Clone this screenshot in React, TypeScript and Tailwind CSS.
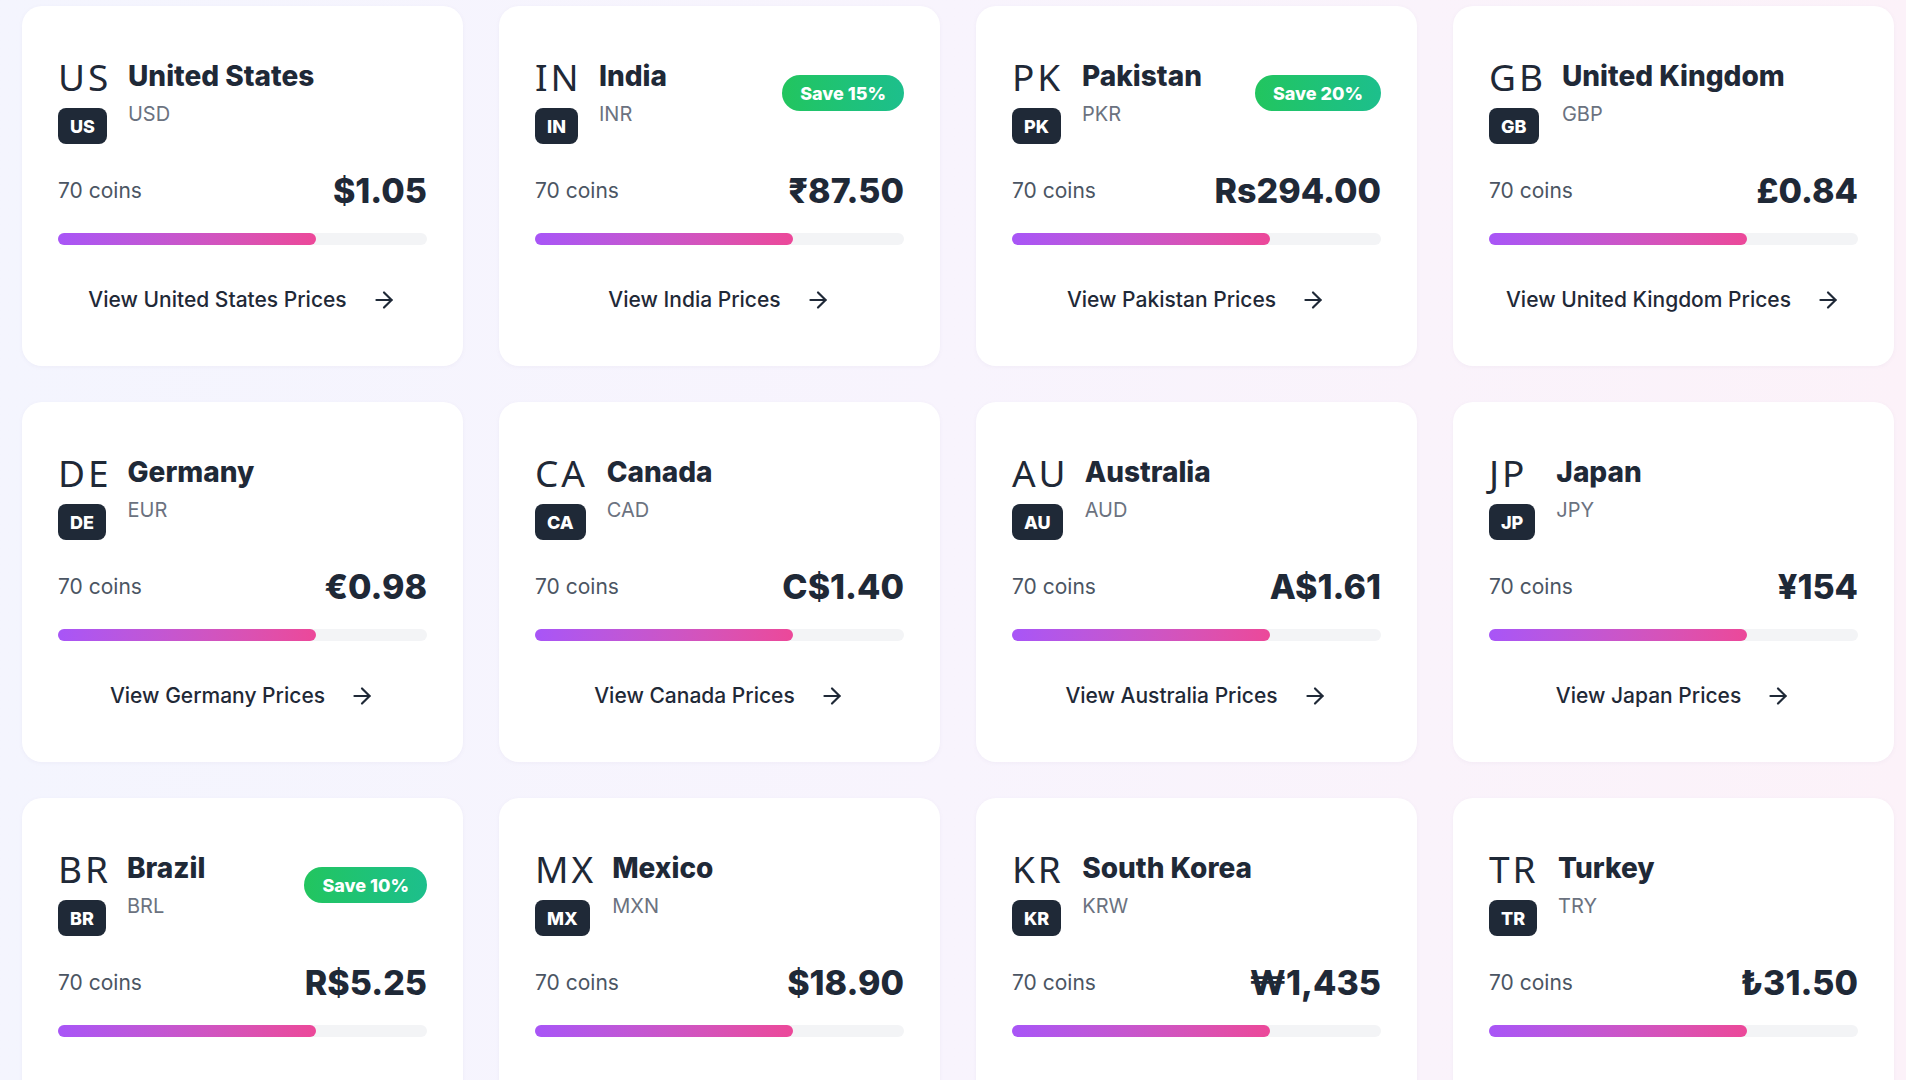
import { ArrowRight } from 'lucide-react';

type Country = {
  code: string;
  name: string;
  currency: string;
  price: string;
  save?: string;
};

const countries: Country[] = [
  { code: 'US', name: 'United States', currency: 'USD', price: '$1.05' },
  { code: 'IN', name: 'India', currency: 'INR', price: '₹87.50', save: 'Save 15%' },
  { code: 'PK', name: 'Pakistan', currency: 'PKR', price: 'Rs294.00', save: 'Save 20%' },
  { code: 'GB', name: 'United Kingdom', currency: 'GBP', price: '£0.84' },
  { code: 'DE', name: 'Germany', currency: 'EUR', price: '€0.98' },
  { code: 'CA', name: 'Canada', currency: 'CAD', price: 'C$1.40' },
  { code: 'AU', name: 'Australia', currency: 'AUD', price: 'A$1.61' },
  { code: 'JP', name: 'Japan', currency: 'JPY', price: '¥154' },
  { code: 'BR', name: 'Brazil', currency: 'BRL', price: 'R$5.25', save: 'Save 10%' },
  { code: 'MX', name: 'Mexico', currency: 'MXN', price: '$18.90' },
  { code: 'KR', name: 'South Korea', currency: 'KRW', price: '₩1,435' },
  { code: 'TR', name: 'Turkey', currency: 'TRY', price: '₺31.50' },
];

function CountryCard({ c }: { c: Country }) {
  return (
    <div className="flex h-[360px] w-[441px] flex-col rounded-[20px] bg-white px-9 pt-9 shadow-[0_1px_4px_rgba(120,110,160,0.06)]">
      <div className="flex h-[102px] items-center justify-between">
        <div className="flex items-center gap-[21px]">
          <div className="flex flex-col items-start">
            {/* flag falls back to letters */}
            <div className="mr-[-5px] h-[58px] font-['Noto_Sans',sans-serif] text-[37px] leading-[70px] tracking-[0.08em] text-[#1f2937]">
              {c.code}
            </div>
            <span className="mt-2 flex h-9 items-center rounded-lg bg-[#1f2937] px-3 text-[18px] font-extrabold text-white">
              {c.code}
            </span>
          </div>
          <div className="flex flex-col">
            <h3 className="text-[28px] font-extrabold leading-[36px] text-[#1f2937]">{c.name}</h3>
            <p className="mt-[6px] text-[20px] leading-[28px] text-[#6b7280]">{c.currency}</p>
          </div>
        </div>
        {c.save && (
          <span className="flex h-9 items-center rounded-full bg-linear-to-r from-[#22c55e] to-[#1dbf8c] px-[18px] text-[18px] font-extrabold text-white">
            {c.save}
          </span>
        )}
      </div>

      <div className="mt-[25px] flex h-[44px] items-center justify-between">
        <span className="text-[21px] leading-[28px] text-[#4b5563]">70 coins</span>
        <span className="text-[34px] font-extrabold leading-[44px] text-[#1f2937]">{c.price}</span>
      </div>

      <div className="mt-5 h-3 w-full rounded-full bg-[#f3f4f6]">
        <div className="h-3 w-[70%] rounded-full bg-linear-to-r from-[#a855f7] to-[#ec4899]" />
      </div>

      <button className="mt-[29px] flex items-center justify-center gap-6 py-3 text-[21px] font-medium leading-[28px] text-[#1f2937]">
        View {c.name} Prices
        <ArrowRight size={26} strokeWidth={2} />
      </button>
    </div>
  );
}

export default function App() {
  return (
    <div
      className="h-[1080px] overflow-hidden bg-linear-to-r from-[#f4f5fe] via-[#f8f4fd] to-[#fcf2f9] pl-[22px] pt-[6px]"
      style={{ fontFamily: 'Inter, "Noto Sans", "DejaVu Sans", sans-serif' }}
    >
      <div className="grid grid-cols-[repeat(4,441px)] gap-9">
        {countries.map(c => (
          <CountryCard key={c.code} c={c} />
        ))}
      </div>
    </div>
  );
}
